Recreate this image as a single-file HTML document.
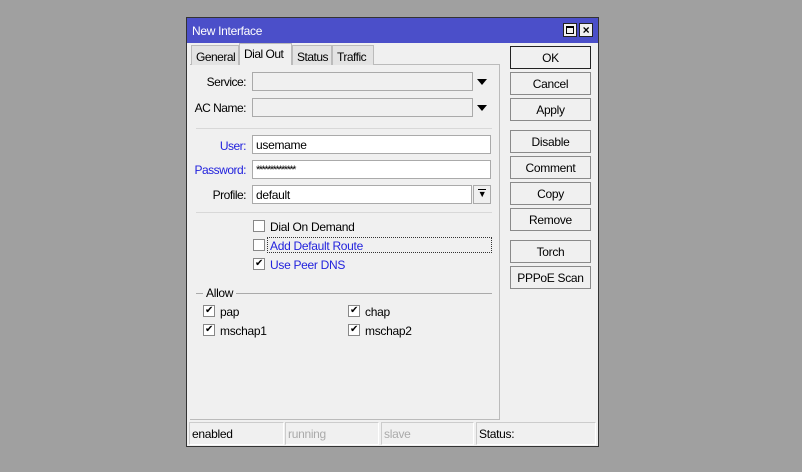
<!DOCTYPE html>
<html><head><style>
*{box-sizing:border-box;margin:0;padding:0}
body{width:802px;height:472px;background:#a0a0a0;font-family:"Liberation Sans",sans-serif;font-size:12px;letter-spacing:-0.3px;color:#000;position:relative;overflow:hidden}
.a{position:absolute}
.win{left:186px;top:17px;width:413px;height:430px;background:#f0f0f0;border:1px solid #333}
.title{left:187px;top:18px;width:411px;height:25px;background:#4b4fc9;color:#fff;padding:6px 0 0 5px}
.tb{width:14px;height:14px;background:#f0f0f0;border:1px solid #222;top:23px}
.tab{top:45px;height:20px;border:1px solid #bbb;border-bottom:none;background:#e3e3e3;padding:4px 0 0 4px;letter-spacing:-0.5px}
.panel{left:190px;top:64px;width:310px;height:356px;border:1px solid #bbb;border-left:none;background:#f0f0f0}
.in{height:19px;border:1px solid #aaa;background:#f0f0f0;padding:2px 3px}
.in.w{background:#fff}
.lbl{text-align:right;width:60px;letter-spacing:-0.5px}
.blue{color:#2222dd}
.cb{width:12px;height:12px;border:1px solid #888;background:#fff;font-size:10px;line-height:10px;text-align:center}
.btn{left:510px;width:81px;height:23px;border:1px solid #8a8a8a;background:#f0f0f0;text-align:center;padding-top:4px}
.sep{height:1px;background:#d8d8d8}
.st{top:422px;height:23px;border:1px solid #ccc;border-right-color:#fff;border-bottom-color:#fff;padding:4px 2px}
</style></head><body>
<div class="a win"></div>
<div class="a title">New Interface</div>
<div class="a tb" style="left:563px"><div style="position:absolute;left:2px;top:2px;width:8px;height:8px;border:1px solid #000;border-top-width:2px"></div></div>
<div class="a tb" style="left:579px;font-weight:bold;font-size:12px;line-height:12px;text-align:center">×</div>
<div class="a panel"></div>
<div class="a tab" style="left:191px;width:48px">General</div>
<div class="a tab" style="left:239px;top:43px;height:22px;width:53px;background:#f0f0f0;padding-top:3px;z-index:2">Dial Out</div>
<div class="a tab" style="left:292px;width:40px">Status</div>
<div class="a tab" style="left:332px;width:42px">Traffic</div>

<div class="a lbl" style="left:186px;top:75px">Service:</div>
<div class="a in" style="left:252px;top:72px;width:221px"></div>
<div class="a" style="left:477px;top:79px;width:0;height:0;border-left:5px solid transparent;border-right:5px solid transparent;border-top:6px solid #000"></div>
<div class="a lbl" style="left:186px;top:101px">AC Name:</div>
<div class="a in" style="left:252px;top:98px;width:221px"></div>
<div class="a" style="left:477px;top:105px;width:0;height:0;border-left:5px solid transparent;border-right:5px solid transparent;border-top:6px solid #000"></div>
<div class="a sep" style="left:196px;top:128px;width:296px"></div>

<div class="a lbl blue" style="left:186px;top:139px">User:</div>
<div class="a in w" style="left:252px;top:135px;width:239px">usemame</div>
<div class="a lbl blue" style="left:186px;top:163px">Password:</div>
<div class="a in w" style="left:252px;top:160px;width:239px;font-size:11px;letter-spacing:-1.5px;padding-top:3px">**************</div>
<div class="a lbl" style="left:186px;top:188px">Profile:</div>
<div class="a in w" style="left:252px;top:185px;width:220px">default</div>
<div class="a in" style="left:473px;top:185px;width:18px;text-align:center;font-size:9px;padding:2px 0;line-height:12px">▼</div>
<div class="a" style="left:478px;top:189px;width:8px;height:1px;background:#000"></div>
<div class="a sep" style="left:196px;top:212px;width:296px"></div>

<div class="a cb" style="left:253px;top:220px"></div><div class="a" style="left:270px;top:220px">Dial On Demand</div>
<div class="a cb" style="left:253px;top:239px"></div>
<div class="a blue" style="left:267px;top:237px;width:225px;height:16px;border:1px dotted #333;padding:1px 2px">Add Default Route</div>
<div class="a cb" style="left:253px;top:258px">✔</div><div class="a blue" style="left:270px;top:258px">Use Peer DNS</div>

<div class="a sep" style="left:196px;top:293px;width:296px;background:#aaa"></div>
<div class="a" style="left:203px;top:286px;background:#f0f0f0;padding:0 3px">Allow</div>
<div class="a cb" style="left:203px;top:305px">✔</div><div class="a" style="left:220px;top:305px">pap</div>
<div class="a cb" style="left:348px;top:305px">✔</div><div class="a" style="left:365px;top:305px">chap</div>
<div class="a cb" style="left:203px;top:324px">✔</div><div class="a" style="left:220px;top:324px">mschap1</div>
<div class="a cb" style="left:348px;top:324px">✔</div><div class="a" style="left:365px;top:324px">mschap2</div>

<div class="a btn" style="top:46px;border-color:#222">OK</div>
<div class="a btn" style="top:72px">Cancel</div>
<div class="a btn" style="top:98px">Apply</div>
<div class="a btn" style="top:130px">Disable</div>
<div class="a btn" style="top:156px">Comment</div>
<div class="a btn" style="top:182px">Copy</div>
<div class="a btn" style="top:208px">Remove</div>
<div class="a btn" style="top:240px">Torch</div>
<div class="a btn" style="top:266px">PPPoE Scan</div>

<div class="a st" style="left:189px;width:95px">enabled</div>
<div class="a st" style="left:285px;width:94px;color:#aaa">running</div>
<div class="a st" style="left:381px;width:93px;color:#aaa">slave</div>
<div class="a st" style="left:476px;width:120px">Status:</div>
</body></html>
